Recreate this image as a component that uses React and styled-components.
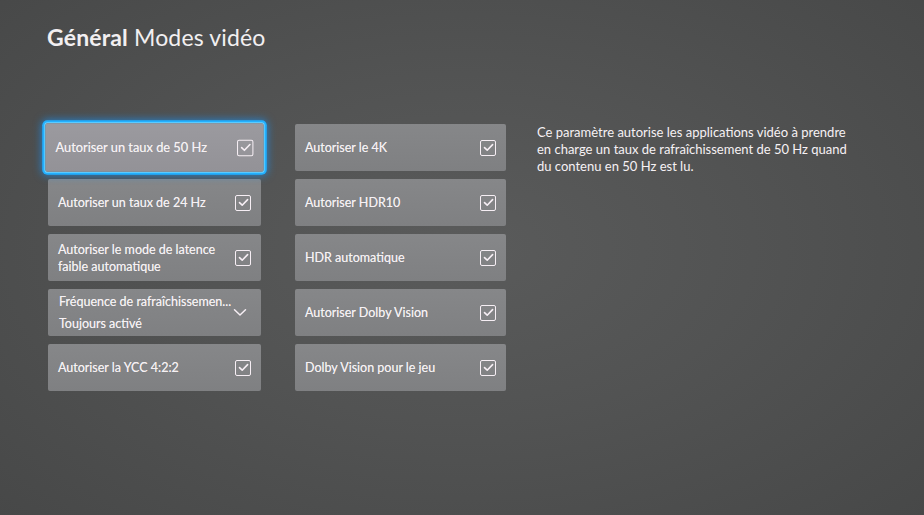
import React from "react";
import styled, { createGlobalStyle } from "styled-components";

const Global = createGlobalStyle`
  html, body { margin: 0; padding: 0; }
  body { background: #4b4c4c; }
  * { box-sizing: border-box; }
`;

const Screen = styled.div`
  width: 924px;
  height: 515px;
  overflow: hidden;
  background: radial-gradient(ellipse 70% 75% at 50% 48%, #5a5b5b 0%, #525353 45%, #474848 100%);
  font-family: "Lato", "Noto Sans", sans-serif;
  color: #f6f1f4;
  padding: 23px 0 0 47px;
`;

const Title = styled.h1`
  margin: 0;
  font-size: 23px;
  line-height: 28px;
  font-weight: 400;
  letter-spacing: 0.15px;
  color: #f2eff1;
  b { font-weight: 700; }
`;

const Body = styled.div`
  display: flex;
  align-items: flex-start;
  margin-top: 73px;
`;

const Columns = styled.div`
  display: grid;
  grid-template-columns: 213px 211px;
  column-gap: 34px;
  margin-left: 1px;
`;

const Column = styled.div`
  display: flex;
  flex-direction: column;
  gap: 8px;
`;

const Tile = styled.div`
  height: 47px;
  display: flex;
  align-items: center;
  justify-content: space-between;
  padding: 0 10px 0 ${(p) => (p.$pad ? p.$pad : 10)}px;
  background: ${(p) =>
    p.$focused
      ? "linear-gradient(180deg, #9b9a9f 0%, #939297 100%)"
      : "linear-gradient(180deg, #868789 0%, #7f8082 100%)"};
  border-radius: 2px;
  font-size: 12.5px;
  text-shadow: 0 0 0.4px rgba(255, 255, 255, 0.6);
  ${(p) =>
    p.$focused &&
    `
    transform: scale(1.025, 1.03);
    box-shadow: 0 0 0 1px #6fd3ff, 0 0 0 3px #22b0ff, 0 0 8px 3px rgba(20,150,255,0.75);
  `}
`;

const Label = styled.div`
  display: flex;
  flex-direction: column;
  line-height: ${(p) => (p.$lh ? p.$lh : 17)}px;
  white-space: nowrap;
`;

const Line = styled.span`
  white-space: nowrap;
`;

const Box = styled.span`
  flex: none;
  width: 16px;
  height: 16px;
  border: 1.5px solid #f6eef4;
  border-radius: 2px;
  display: flex;
  align-items: center;
  justify-content: center;
`;

const Description = styled.p`
  margin: 0 0 0 31px;
  width: 322px;
  font-size: 13px;
  line-height: 17px;
  color: #f6f1f4;
`;

const Check = () => (
  <Box>
    <svg width="11" height="9" viewBox="0 0 11 9" fill="none">
      <path d="M1.5 4.6 L4.2 7.2 L9.6 1.6" stroke="#f6eef4" strokeWidth="1.6" strokeLinecap="round" strokeLinejoin="round" />
    </svg>
  </Box>
);

const Chevron = () => (
  <svg width="14" height="9" viewBox="0 0 14 9" fill="none" style={{ marginRight: 4 }}>
    <path d="M1.5 1.8 L7 7 L12.5 1.8" stroke="#f6eef4" strokeWidth="1.5" strokeLinecap="round" strokeLinejoin="round" />
  </svg>
);

export default function App() {
  return (
    <Screen>
      <Global />
      <Title>
        <b>Général</b> Modes vidéo
      </Title>
      <Body>
        <Columns>
          <Column>
            <Tile $focused>
              <Label>Autoriser un taux de 50 Hz</Label>
              <Check />
            </Tile>
            <Tile>
              <Label>Autoriser un taux de 24 Hz</Label>
              <Check />
            </Tile>
            <Tile>
              <Label>
                <Line>Autoriser le mode de latence</Line>
                <Line>faible automatique</Line>
              </Label>
              <Check />
            </Tile>
            <Tile $pad={11}>
              <Label $lh={22}>
                <Line>Fréquence de rafraîchissemen...</Line>
                <Line>Toujours activé</Line>
              </Label>
              <Chevron />
            </Tile>
            <Tile>
              <Label>Autoriser la YCC 4:2:2</Label>
              <Check />
            </Tile>
          </Column>
          <Column>
            <Tile>
              <Label>Autoriser le 4K</Label>
              <Check />
            </Tile>
            <Tile>
              <Label>Autoriser HDR10</Label>
              <Check />
            </Tile>
            <Tile>
              <Label>HDR automatique</Label>
              <Check />
            </Tile>
            <Tile>
              <Label>Autoriser Dolby Vision</Label>
              <Check />
            </Tile>
            <Tile>
              <Label>Dolby Vision pour le jeu</Label>
              <Check />
            </Tile>
          </Column>
        </Columns>
        <Description>
          Ce paramètre autorise les applications vidéo à prendre en charge un taux de rafraîchissement de 50 Hz quand du contenu en 50 Hz est lu.
        </Description>
      </Body>
    </Screen>
  );
}
